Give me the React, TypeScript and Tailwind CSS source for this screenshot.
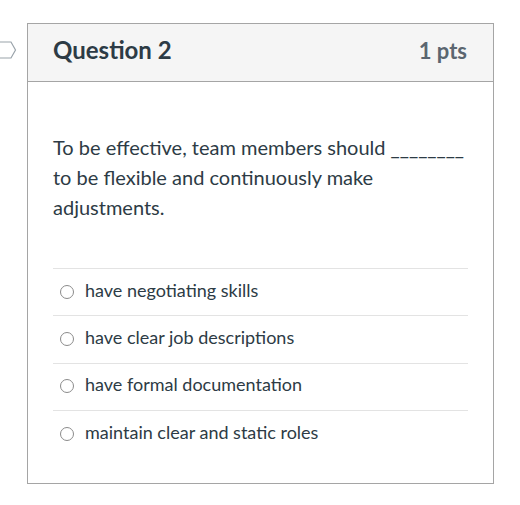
const options = [
  "have negotiating skills",
  "have clear job descriptions",
  "have formal documentation",
  "maintain clear and static roles",
]

export default function App() {
  return (
    <div
      className="relative h-[505px] w-[520px] bg-white pt-[23px] pl-[27px]"
      style={{ fontFamily: "Lato, 'Open Sans', sans-serif" }}
    >
      <svg
        className="absolute left-0 top-[41px]"
        width="17"
        height="18"
        viewBox="0 0 17 18"
        fill="none"
      >
        <path d="M-2 1 H11 L15.5 9 L11 17 H-2" stroke="#9aa3aa" strokeWidth="1.2" />
      </svg>

      <div className="h-[461px] w-[467px] border border-[#a5a5a5]">
        <div className="flex h-[58px] items-center justify-between border-b border-[#a5a5a5] bg-[#f5f5f5] pb-[5px] pl-[25px] pr-[26px]">
          <h3 className="text-[24px] font-bold text-[#2d3b45]">Question 2</h3>
          <span className="text-[22px] font-bold text-[#5b6670]">1 pts</span>
        </div>

        <div className="px-[25px] pt-[50px]">
          <p className="text-[20px] leading-[30px] text-[#2d3b45]">
            To be effective, team members should ________ to be flexible and continuously make
            adjustments.
          </p>

          <div className="mt-[46px]">
            {options.map((opt) => (
              <div
                key={opt}
                className="flex h-[47.4px] items-center gap-[11px] border-t border-[#e3e3e3] pb-[4px] pl-[7px]"
              >
                <span className="mt-[3px] h-[14px] w-[14px] rounded-full border border-[#8b8b8b] bg-white" />
                <span className="text-[18px] text-[#2d3b45]">{opt}</span>
              </div>
            ))}
          </div>
        </div>
      </div>
    </div>
  )
}
